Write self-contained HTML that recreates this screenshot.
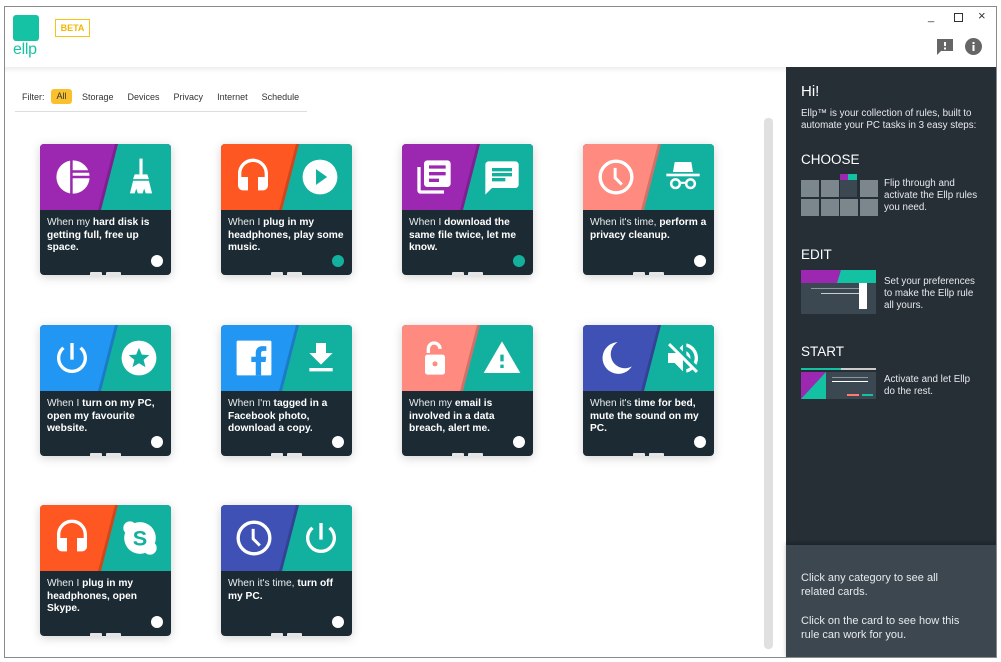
<!DOCTYPE html>
<html><head><meta charset="utf-8"><style>
*{margin:0;padding:0;box-sizing:border-box}
body{width:1001px;height:662px;background:#fff;position:relative;overflow:hidden;font-family:"Liberation Sans",sans-serif}
.win{position:absolute;left:4px;top:6px;width:993px;height:652px;border:1px solid #8a8a8a;background:#fff;overflow:hidden}
.abs{position:absolute}
.card{position:absolute;width:131px;height:131px;border-radius:4px;overflow:hidden;background:#1c2b33;box-shadow:0 2px 10px rgba(0,0,0,.18)}
.card .l,.card .r{position:absolute;top:0;height:66px}
.card .l{left:0;width:100%}
.card .r{left:0;width:100%;clip-path:polygon(78px 0,131px 0,131px 66px,61px 66px)}
.card .sh{position:absolute;left:0;top:0;width:100%;height:66px;clip-path:polygon(75px 0,79px 0,62px 66px,58px 66px);background:rgba(0,0,0,.18)}
.card svg{position:absolute}
.card .t{position:absolute;left:7px;top:73px;width:120px;font-size:10.2px;line-height:12.6px;color:#e8ecee}
.card .t b{color:#fff}
.card .d{position:absolute;left:111px;top:111px;width:12px;height:12px;border-radius:50%;background:#fff}
.card .d.on{background:#13b09e}
.card .n1,.card .n2{position:absolute;bottom:0;height:3px;background:#e3e5e7;border-radius:1px 1px 0 0}
.card .n1{left:50px;width:12px}.card .n2{left:66px;width:15px}
.teal{background:#12b09e}
.side{position:absolute;left:781px;top:60px;width:212px;height:592px;background:#262e36;color:#fff}
.side p{font-size:9.8px;line-height:12px;color:#e8eaec}
.side h2{font-weight:normal;font-size:13.5px;position:absolute;left:15px;color:#fff}
.tile{position:absolute;width:18px;height:17px;background:#7b868d}
</style></head><body>
<div class="win">
 <div class="abs" style="left:8px;top:8px;width:26px;height:26px;background:#16c2a4;border-radius:3px"></div>
 <div class="abs" style="left:8px;top:34px;font-size:16px;color:#16c2a4;letter-spacing:-0.3px">ellp</div>
 <div class="abs" style="left:50px;top:12px;width:35px;height:18px;border:1px solid #f5c518;color:#f0b800;font-size:9px;font-weight:bold;text-align:center;line-height:16px">BETA</div>
 <div class="abs" style="left:923px;top:4px;font-size:11px;color:#333">_</div>
 <div class="abs" style="left:949px;top:6px;width:9px;height:9px;border:1px solid #333"></div>
 <div class="abs" style="left:973px;top:1px;font-size:13px;color:#333">×</div>
 <svg class="abs" style="left:931px;top:31px" width="18" height="18" viewBox="0 0 18 18"><path d="M1 1h16v12H5l-4 4z" fill="#666"/><rect x="8" y="4" width="2" height="4" fill="#fff"/><rect x="8" y="9.5" width="2" height="2" fill="#fff"/></svg>
 <svg class="abs" style="left:959px;top:30px" width="19" height="19" viewBox="0 0 19 19"><circle cx="9.5" cy="9.5" r="8.5" fill="#666"/><rect x="8.5" y="8" width="2" height="6" fill="#fff"/><rect x="8.5" y="5" width="2" height="2" fill="#fff"/></svg>
 <div class="abs" style="left:0;top:60px;width:781px;height:6px;background:linear-gradient(#eee,#fff)"></div>
 <div class="abs" style="left:17px;top:85px;font-size:9px;color:#333;white-space:nowrap">Filter:</div>
 <div class="abs" style="left:46px;top:82px;width:21px;height:15px;background:#fbc02d;border-radius:3px;font-size:9px;color:#333;text-align:center;line-height:15px">All</div>
 <div class="abs" style="left:77px;top:85px;font-size:9px;color:#333;word-spacing:0"><span style="margin-right:14px">Storage</span><span style="margin-right:14px">Devices</span><span style="margin-right:14px">Privacy</span><span style="margin-right:14px">Internet</span><span>Schedule</span></div>
 <div class="abs" style="left:10px;top:104px;width:292px;height:1px;background:#ddd"></div>
 <div class="abs" style="left:759px;top:111px;width:9px;height:531px;background:#e0e0e0;border-radius:4px"></div>

 <div class="card" style="left:35px;top:137px">
  <div class="l" style="background:#9c27b0"></div><div class="sh"></div><div class="r teal"></div>
  <svg style="left:14px;top:14px" width="38" height="38" viewBox="0 0 24 24"><circle cx="12" cy="12" r="10.5" fill="#fff"/><path d="M11 1v22M11 12h12M11 8.5h12" stroke="#9c27b0" stroke-width="1.6" fill="none"/></svg>
  <svg style="left:82px;top:12px" width="38" height="40" viewBox="0 0 24 24"><rect x="11" y="1" width="2" height="10" fill="#fff"/><path d="M8 11h8l1 3H7z" fill="#fff"/><path d="M7 15h10l2 8h-4l-1-3-1 3h-3l-1-3-1 3H5z" fill="#fff"/></svg>
  <div class="t">When my <b>hard disk is getting full, free up space.</b></div><div class="d"></div><div class="n1"></div><div class="n2"></div>
 </div>
 <div class="card" style="left:216px;top:137px">
  <div class="l" style="background:#ff5722"></div><div class="sh"></div><div class="r teal"></div>
  <svg style="left:12px;top:13px" width="40" height="40" viewBox="0 0 24 24"><path fill="#fff" d="M12 1c-4.97 0-9 4.03-9 9v7c0 1.66 1.34 3 3 3h3v-8H5v-2c0-3.87 3.13-7 7-7s7 3.13 7 7v2h-4v8h3c1.66 0 3-1.34 3-3v-7c0-4.97-4.03-9-9-9z"/></svg>
  <svg style="left:80px;top:14px" width="38" height="38" viewBox="0 0 24 24"><circle cx="12" cy="12" r="11" fill="#fff"/><path d="M9.5 7v10l7-5z" fill="#12b09e"/></svg>
  <div class="t">When I <b>plug in my headphones, play some music.</b></div><div class="d on"></div><div class="n1"></div><div class="n2"></div>
 </div>
 <div class="card" style="left:397px;top:137px">
  <div class="l" style="background:#9c27b0"></div><div class="sh"></div><div class="r teal"></div>
  <svg style="left:12px;top:13px" width="40" height="40" viewBox="0 0 24 24"><path fill="#fff" d="M4 6H2v14c0 1.1.9 2 2 2h14v-2H4V6zm16-4H8c-1.1 0-2 .9-2 2v12c0 1.1.9 2 2 2h12c1.1 0 2-.9 2-2V4c0-1.1-.9-2-2-2zm-1 9H9V9h10v2zm-4 4H9v-2h6v2zm4-8H9V5h10v2z"/></svg>
  <svg style="left:80px;top:14px" width="40" height="40" viewBox="0 0 24 24"><path fill="#fff" d="M20 2H4c-1.1 0-1.99.9-1.99 2L2 22l4-4h14c1.1 0 2-.9 2-2V4c0-1.1-.9-2-2-2zM6 9h12v2H6V9zm8 5H6v-2h8v2zm4-6H6V6h12v2z"/></svg>
  <div class="t">When I <b>download the same file twice, let me know.</b></div><div class="d on"></div><div class="n1"></div><div class="n2"></div>
 </div>
 <div class="card" style="left:578px;top:137px">
  <div class="l" style="background:#ff8a80"></div><div class="sh"></div><div class="r teal"></div>
  <svg style="left:13px;top:13px" width="40" height="40" viewBox="0 0 24 24"><circle cx="12" cy="12" r="9.5" stroke="#fff" stroke-width="2" fill="none"/><path d="M11.5 6.5v6l4 4" stroke="#fff" stroke-width="1.8" fill="none"/></svg>
  <svg style="left:80px;top:13px" width="40" height="40" viewBox="0 0 24 24"><path d="M7 3h10l1 6H6z" fill="#fff"/><rect x="2" y="10" width="20" height="1.6" fill="#fff"/><circle cx="7.5" cy="16" r="2.6" stroke="#fff" stroke-width="1.5" fill="none"/><circle cx="16.5" cy="16" r="2.6" stroke="#fff" stroke-width="1.5" fill="none"/><path d="M10 15.5h4" stroke="#fff" stroke-width="1.3"/></svg>
  <div class="t">When it's time, <b>perform a privacy cleanup.</b></div><div class="d"></div><div class="n1"></div><div class="n2"></div>
 </div>

 <div class="card" style="left:35px;top:318px">
  <div class="l" style="background:#2196f3"></div><div class="sh"></div><div class="r teal"></div>
  <svg style="left:12px;top:13px" width="40" height="40" viewBox="0 0 24 24"><path fill="#fff" d="M13 3h-2v10h2V3zm4.83 2.17l-1.42 1.42C17.99 7.86 19 9.81 19 12c0 3.87-3.13 7-7 7s-7-3.13-7-7c0-2.19 1.01-4.14 2.58-5.42L6.17 5.17C4.23 6.82 3 9.26 3 12c0 4.97 4.030 9 9 9s9-4.030 9-9c0-2.74-1.23-5.18-3.17-6.83z"/></svg>
  <svg style="left:80px;top:14px" width="38" height="38" viewBox="0 0 24 24"><circle cx="12" cy="12" r="11" fill="#fff"/><path fill="#12b09e" d="M12 5.5l1.8 4.4 4.7.3-3.6 3 1.2 4.6L12 15.3l-4.1 2.5 1.2-4.6-3.6-3 4.7-.3z"/></svg>
  <div class="t">When I <b>turn on my PC, open my favourite website.</b></div><div class="d"></div><div class="n1"></div><div class="n2"></div>
 </div>
 <div class="card" style="left:216px;top:318px">
  <div class="l" style="background:#2196f3"></div><div class="sh"></div><div class="r teal"></div>
  <svg style="left:14px;top:14px" width="38" height="38" viewBox="0 0 24 24"><rect x="1" y="1" width="22" height="22" rx="1" fill="#fff"/><path fill="#2196f3" d="M16.5 23v-8.5h2.8l.4-3.3h-3.2V9.1c0-.9.3-1.6 1.6-1.6h1.7V4.6c-.3 0-1.3-.1-2.5-.1-2.5 0-4.2 1.5-4.2 4.3v2.4H10.3v3.3h2.8V23z"/></svg>
  <svg style="left:80px;top:13px" width="40" height="40" viewBox="0 0 24 24"><path fill="#fff" d="M19 9h-4V3H9v6H5l7 7 7-7zM5 18v2h14v-2H5z"/></svg>
  <div class="t">When I'm <b>tagged in a Facebook photo, download a copy.</b></div><div class="d"></div><div class="n1"></div><div class="n2"></div>
 </div>
 <div class="card" style="left:397px;top:318px">
  <div class="l" style="background:#ff8a80"></div><div class="sh"></div><div class="r teal"></div>
  <svg style="left:13px;top:13px" width="40" height="40" viewBox="0 0 24 24"><path d="M8 9V6.5a3.5 3.5 0 0 1 7 0" stroke="#fff" stroke-width="2" fill="none"/><rect x="6" y="10" width="12" height="12" rx="1.5" fill="#fff"/><circle cx="12" cy="15.5" r="1.5" fill="#ff8a80"/></svg>
  <svg style="left:80px;top:13px" width="40" height="40" viewBox="0 0 24 24"><path fill="#fff" d="M1 21h22L12 2 1 21zm12-3h-2v-2h2v2zm0-4h-2v-4h2v4z"/></svg>
  <div class="t">When my <b>email is involved in a data breach, alert me.</b></div><div class="d"></div><div class="n1"></div><div class="n2"></div>
 </div>
 <div class="card" style="left:578px;top:318px">
  <div class="l" style="background:#3f51b5"></div><div class="sh"></div><div class="r teal"></div>
  <svg style="left:13px;top:13px" width="40" height="40" viewBox="0 0 24 24"><path fill="#fff" d="M13 2.5A9.5 9.5 0 1 0 21.5 17 8 8 0 0 1 13 2.5z"/></svg>
  <svg style="left:80px;top:13px" width="40" height="40" viewBox="0 0 24 24"><path fill="#fff" d="M16.5 12c0-1.77-1.02-3.29-2.5-4.03v2.21l2.45 2.45c.03-.2.05-.41.05-.63zm2.5 0c0 .94-.2 1.82-.54 2.64l1.51 1.51C20.63 14.91 21 13.5 21 12c0-4.28-2.99-7.86-7-8.77v2.06c2.89.86 5 3.54 5 6.71zM4.27 3L3 4.27 7.73 9H3v6h4l5 5v-6.73l4.25 4.25c-.67.52-1.42.93-2.25 1.18v2.06c1.38-.31 2.63-.95 3.69-1.81L19.73 21 21 19.73l-9-9L4.27 3zM12 4L9.91 6.09 12 8.18V4z"/></svg>
  <div class="t">When it's <b>time for bed, mute the sound on my PC.</b></div><div class="d"></div><div class="n1"></div><div class="n2"></div>
 </div>

 <div class="card" style="left:35px;top:498px">
  <div class="l" style="background:#ff5722"></div><div class="sh"></div><div class="r teal"></div>
  <svg style="left:12px;top:13px" width="40" height="40" viewBox="0 0 24 24"><path fill="#fff" d="M12 1c-4.97 0-9 4.03-9 9v7c0 1.66 1.34 3 3 3h3v-8H5v-2c0-3.87 3.13-7 7-7s7 3.13 7 7v2h-4v8h3c1.66 0 3-1.34 3-3v-7c0-4.97-4.03-9-9-9z"/></svg>
  <svg style="left:80px;top:13px" width="40" height="40" viewBox="0 0 24 24"><circle cx="12" cy="12" r="9.5" fill="#fff"/><circle cx="6" cy="6" r="4" fill="#fff"/><circle cx="18" cy="18" r="4" fill="#fff"/><text x="12" y="16.5" text-anchor="middle" font-family="Liberation Sans" font-weight="bold" font-size="13" fill="#12b09e">S</text></svg>
  <div class="t">When I <b>plug in my headphones, open Skype.</b></div><div class="d"></div><div class="n1"></div><div class="n2"></div>
 </div>
 <div class="card" style="left:216px;top:498px">
  <div class="l" style="background:#3f51b5"></div><div class="sh"></div><div class="r teal"></div>
  <svg style="left:13px;top:13px" width="40" height="40" viewBox="0 0 24 24"><circle cx="12" cy="12" r="9.5" stroke="#fff" stroke-width="2" fill="none"/><path d="M11.5 6.5v6l4 4" stroke="#fff" stroke-width="1.8" fill="none"/></svg>
  <svg style="left:80px;top:13px" width="40" height="40" viewBox="0 0 24 24"><path fill="#fff" d="M13 3h-2v10h2V3zm4.83 2.17l-1.42 1.42C17.99 7.86 19 9.81 19 12c0 3.87-3.13 7-7 7s-7-3.13-7-7c0-2.19 1.01-4.14 2.58-5.42L6.17 5.17C4.23 6.82 3 9.26 3 12c0 4.97 4.03 9 9 9s9-4.03 9-9c0-2.74-1.23-5.18-3.17-6.83z"/></svg>
  <div class="t">When it's time, <b>turn off my PC.</b></div><div class="d"></div><div class="n1"></div><div class="n2"></div>
 </div>

 <div class="side">
  <div class="abs" style="left:15px;top:16px;font-size:15px">Hi!</div>
  <p class="abs" style="left:15px;top:41px;width:195px">Ellp™ is your collection of rules, built to automate your PC tasks in 3 easy steps:</p>
  <h2 style="top:85px">CHOOSE</h2>
  <div class="tile" style="left:15px;top:113px"></div><div class="tile" style="left:35px;top:113px"></div>
  <div class="abs" style="left:54px;top:111px;width:17px;height:19px;background:#3b4852"></div>
  <div class="abs" style="left:54px;top:107px;width:8px;height:6px;background:#9c27b0"></div><div class="abs" style="left:62px;top:107px;width:9px;height:6px;background:#13c1a3"></div>
  <div class="tile" style="left:74px;top:113px"></div>
  <div class="tile" style="left:15px;top:132px"></div><div class="tile" style="left:35px;top:132px"></div><div class="tile" style="left:54px;top:132px"></div><div class="tile" style="left:74px;top:132px"></div>
  <p class="abs" style="left:98px;top:111px;width:98px">Flip through and activate the Ellp rules you need.</p>
  <h2 style="top:180px">EDIT</h2>
  <div class="abs" style="left:15px;top:203px;width:75px;height:44px;background:#3b4852"></div>
  <div class="abs" style="left:15px;top:203px;width:75px;height:13px;background:#13c1a3"></div>
  <div class="abs" style="left:15px;top:203px;width:40px;height:13px;background:#9c27b0;clip-path:polygon(0 0,100% 0,90% 100%,0 100%)"></div>
  <div class="abs" style="left:25px;top:221px;width:50px;height:1px;background:#8c979e"></div>
  <div class="abs" style="left:35px;top:226px;width:40px;height:1px;background:#c9cfd3"></div>
  <div class="abs" style="left:73px;top:216px;width:8px;height:26px;background:#fff"></div>
  <p class="abs" style="left:98px;top:209px;width:98px">Set your preferences to make the Ellp rule all yours.</p>
  <h2 style="top:277px">START</h2>
  <div class="abs" style="left:15px;top:301px;width:40px;height:2px;background:#13c1a3"></div><div class="abs" style="left:55px;top:301px;width:35px;height:2px;background:#ccc"></div>
  <div class="abs" style="left:15px;top:305px;width:75px;height:27px;background:#3b4852"></div>
  <div class="abs" style="left:15px;top:305px;width:25px;height:27px;background:#13c1a3"></div>
  <div class="abs" style="left:15px;top:305px;width:25px;height:27px;background:#9c27b0;clip-path:polygon(0 0,100% 0,0 100%)"></div>
  <div class="abs" style="left:46px;top:310px;width:36px;height:1px;background:#8c979e"></div>
  <div class="abs" style="left:46px;top:314px;width:36px;height:1px;background:#fff"></div>
  <div class="abs" style="left:61px;top:327px;width:12px;height:2px;background:#ff7a6e"></div><div class="abs" style="left:76px;top:327px;width:11px;height:2px;background:#13c1a3"></div>
  <p class="abs" style="left:98px;top:307px;width:90px">Activate and let Ellp do the rest.</p>
  <div class="abs" style="left:0;top:478px;width:212px;height:114px;background:#3c4750;box-shadow:0 -2px 4px rgba(0,0,0,.25)"></div>
  <p class="abs" style="left:15px;top:505px;width:165px;font-size:11px;line-height:13.5px">Click any category to see all related cards.</p>
  <p class="abs" style="left:15px;top:548px;width:170px;font-size:11px;line-height:13.5px">Click on the card to see how this rule can work for you.</p>
 </div>
</div>
</body></html>
